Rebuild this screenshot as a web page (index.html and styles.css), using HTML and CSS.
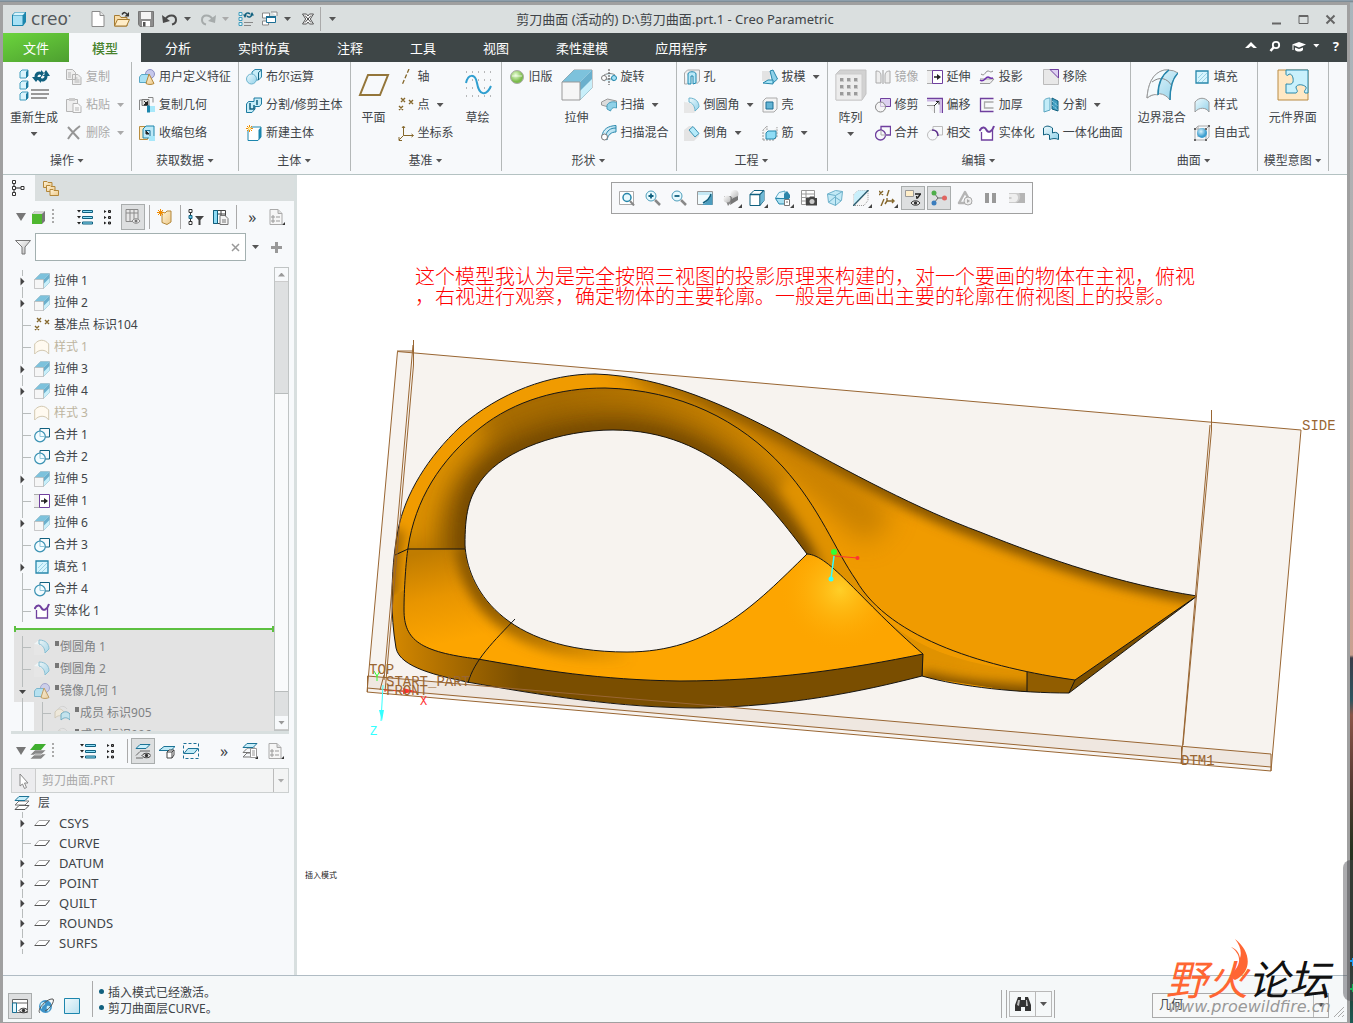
FILE: index.html
```html
<!DOCTYPE html>
<html lang="zh-CN">
<head>
<meta charset="utf-8">
<title>剪刀曲面 - Creo Parametric</title>
<link rel="stylesheet" href="styles.css">
</head>
<body>
<svg class="defs" aria-hidden="true">
<defs>
<linearGradient id="gb" x1="0" y1="0" x2="1" y2="1"><stop offset="0" stop-color="#effafd"/><stop offset="1" stop-color="#92d2ea"/></linearGradient>
<linearGradient id="gt" x1="0" y1="0" x2="1" y2="1"><stop offset="0" stop-color="#fff3d8"/><stop offset="1" stop-color="#ecc98a"/></linearGradient>
<linearGradient id="gg" x1="0" y1="0" x2="1" y2="1"><stop offset="0" stop-color="#fff"/><stop offset="1" stop-color="#b8b8b8"/></linearGradient>
<radialGradient id="rg" cx=".4" cy=".35"><stop offset="0" stop-color="#eaffd8"/><stop offset="1" stop-color="#7cbc4c"/></radialGradient>
<radialGradient id="rb" cx=".4" cy=".35"><stop offset="0" stop-color="#d8f2fb"/><stop offset="1" stop-color="#3d9fd0"/></radialGradient>
</defs>
<symbol id="cube" viewBox="0 0 16 16"><path d="M1 4l3-3h11v10l-3 4H1z" fill="#1c86ad"/><path d="M2 4.500h9.500v9.500H2z" fill="#a8e1f5"/><path d="M4 1.500h10l-2 2.500H2z" fill="#d8f4fc"/></symbol>
<symbol id="new" viewBox="0 0 16 16"><path d="M2 .5h8l4 4v11H2z" fill="#fff" stroke="#8a8a8a"/><path d="M10 .5v4h4" fill="#e6e6e6" stroke="#8a8a8a"/></symbol>
<symbol id="open" viewBox="0 0 16 16"><path d="M.5 15V4.500h5l1.500 2h6V15z" fill="#f8dca8" stroke="#a57b32"/><path d="M.5 15l3-6.500h12l-3 6.500z" fill="#ffedc8" stroke="#a57b32"/><path d="M8 3.500c2-3 4-2 5 0" fill="none" stroke="#333" stroke-width="1.500"/><path d="M15 1v4.500h-4.500z" fill="#333"/></symbol>
<symbol id="save" viewBox="0 0 16 16"><path d="M.5.5h15v15H2l-1.500-2z" fill="#8d8d8d" stroke="#777"/><path d="M3 1h10v7H3z" fill="#f4f4f4"/><path d="M4 10h8v5.500H4z" fill="#fff"/><path d="M5 11h2.500v4.500H5z" fill="#555"/></symbol>
<symbol id="undo" viewBox="0 0 16 16"><path d="M3 9c3-6 11-6 11 0 0 3-2 4-4 4.500" fill="none" stroke="currentColor" stroke-width="2"/><path d="M0 4l1 8 7-2z" fill="currentColor"/></symbol>
<symbol id="regen" viewBox="0 0 16 16"><path d="M1 1.500h3v3H1zM1 6.500h3v3H1zM1 11.500h3v3H1z" fill="#e4f7fd" stroke="#3e9cbd"/><path d="M6 11.500h9M6 14.500h7" stroke="#888"/><path d="M7 5c0-3 3-4 5-2M14 3c0 3-3 4-5 2" fill="none" stroke="#10607f" stroke-width="1.500"/><path d="M5 3.500h4L7 7zM12 4.500h4L14 1z" fill="#10607f"/></symbol>
<symbol id="wins" viewBox="0 0 16 16"><path d="M.5 2h7v5h-7zM.5 10h6v4h-6zM9 1h6v4" fill="#fff" stroke="#888"/><path d="M4.500 5.500h9v6h-9z" fill="#fff" stroke="#1c6f95"/><path d="M4 5h10v2H4z" fill="#1c6f95"/></symbol>
<symbol id="closew" viewBox="0 0 16 16"><path d="M2.500 3h4L8 5l1.500-2h4l-3.200 5 3.200 5h-4L8 11l-1.500 2h-4l3.200-5z" fill="#fff" stroke="#555"/><path d="M5 4.500l6 7M11 4.500l-6 7" stroke="#444"/></symbol>
<symbol id="copy" viewBox="0 0 16 16"><path d="M.5.5h6l3 3v7h-9zM6.500 5.500h5.500l3 3v7H6.500z" fill="#eee" stroke="#b5b5b5"/><path d="M2 4h3M2 6h3M2 8h3M8.500 9h3M8.500 11h5M8.500 13h5" stroke="#b5b5b5"/></symbol>
<symbol id="paste" viewBox="0 0 16 16"><path d="M.5 2.500h11v12H.5z" fill="#eee" stroke="#b5b5b5"/><path d="M3 1h6v3H3z" fill="#ccc"/><path d="M7 6.500h5l3 3v6H7z" fill="#f8f8f8" stroke="#b5b5b5"/><path d="M9 11h4M9 13h4" stroke="#b5b5b5"/></symbol>
<symbol id="del" viewBox="0 0 16 16"><path d="M2 2l11 12M14 1Q7 6 2 14" stroke="#969696" stroke-width="2" fill="none"/></symbol>
<symbol id="udf" viewBox="0 0 16 16"><circle cx="11" cy="5" r="4.500" fill="#c5c8ec" stroke="#8b8fc4"/><path d="M.5 8l2-2.500h7V12l-2 1.500h-7z" fill="#a8e1f5" stroke="#5aa8c5"/><path d="M10 5l5 9.500c-2 1.300-6 1.300-8 0z" fill="url(#gt)" stroke="#b3873a"/></symbol>
<symbol id="copyg" viewBox="0 0 16 16"><path d="M.5 3v10M.5 3h3M9 .5h5v5" stroke="#888" fill="none"/><path d="M3 2.500h7v6H3z" fill="#dcdcdc" stroke="#777"/><path d="M5 4l3 3M8.500 4.500V8H5z" stroke="#222" fill="#222"/><path d="M8 8.500h3v7H8z" fill="#1c86ad"/><path d="M11 9h5v6h-5z" fill="#a8e8fa"/></symbol>
<symbol id="shrink" viewBox="0 0 16 16"><path d="M.5 1.500h8v13h-8z" fill="#ffeac2" stroke="#b98e40"/><path d="M4 4l3-3h8v10l-2 2H4z" fill="#bde9f7" stroke="#1c86ad"/><path d="M6 5.500h5v6" stroke="#1c6f95" fill="none"/><path d="M7 6l3 3H7z" fill="#222" stroke="#222"/><path d="M10 11h6v5h-6z" fill="#a8e8fa"/></symbol>
<symbol id="bool" viewBox="0 0 16 16"><path d="M6 3l3-2.500h6.500V8l-3 3H6z" fill="#c7edf8" stroke="#2d87ab"/><path d="M12.500 11V3.500L15.500 1" fill="none" stroke="#10607f"/><circle cx="5.500" cy="10" r="5" fill="url(#gb)" stroke="#6cb3cd"/></symbol>
<symbol id="splitb" viewBox="0 0 16 16"><path d="M8 1h7.500v6l-2 2.500H9V12l-3 3.500H.5V7l2-2.500H8z" fill="#c7edf8" stroke="#1c7ba0"/><path d="M4 6v6h4V8M11 3v5" fill="none" stroke="#10607f" stroke-width="1.500"/></symbol>
<symbol id="newb" viewBox="0 0 16 16"><path d="M2 5l3-3h10v10l-3 3.500H2z" fill="#fff" stroke="#1c86ad"/><path d="M12.500 5L15 2v10l-2.500 3z" fill="#1c86ad"/><path d="M0 3.500h7M3.500 0v7M1 1l5 5M6 1L1 6" stroke="#f08b00"/><circle cx="3.500" cy="3.500" r="1.500" fill="#fff3a0"/></symbol>
<symbol id="axis" viewBox="0 0 16 16"><path d="M11 0L4 16" stroke="#84662a" stroke-width="1.300" stroke-dasharray="4 2"/></symbol>
<symbol id="pts" viewBox="0 0 16 16"><path d="M3 1l4 4m0-4L3 5M11 3l4 4m0-4l-4 4M1 9l4 4m0-4l-4 4" stroke="#84662a" stroke-width="1.400"/></symbol>
<symbol id="csys" viewBox="0 0 16 16"><path d="M5.500 2v8.500H15M5.500 10.500L1 15M4 3l1.500-2L7 3M13.500 9l2 1.500-2 1.500M1 12v3.500h3" fill="none" stroke="#84662a"/></symbol>
<symbol id="sphere" viewBox="0 0 16 16"><circle cx="8" cy="8" r="6.500" fill="url(#rg)" stroke="#aaa"/><path d="M3 7h10" stroke="#fff" opacity=".7"/></symbol>
<symbol id="rev" viewBox="0 0 16 16"><circle cx="3" cy="9" r="2.500" fill="#fff" stroke="#777"/><path d="M3 6c4-2 8-2 11 0M3 12c4-3 7-3 10 0" fill="#d8f2fa" stroke="#888"/><path d="M8 0v16" stroke="#444" stroke-dasharray="2 1"/><circle cx="13" cy="9" r="2.500" fill="#a8e1f5" stroke="#1c86ad"/></symbol>
<symbol id="sweep" viewBox="0 0 16 16"><path d="M.5 5l6-3 9 2v3l-5-1-3 2v2l-7-2z" fill="#dcdcdc" stroke="#999"/><path d="M6 8c2-3 6-4 9.500-2.500V11c-3-1-5 0-6 3L6 12z" fill="#8fd1e8" stroke="#4a9dbb"/></symbol>
<symbol id="sblend" viewBox="0 0 16 16"><path d="M1 11C2 4 7 1 15 .500V7C10 7 7 10 6 15z" fill="url(#gb)" stroke="#2b88ad"/><path d="M5 10C6 6 9 3 15 3" fill="none" stroke="#2b88ad"/><circle cx="3.500" cy="12" r="3" fill="#fff" stroke="#777"/></symbol>
<symbol id="hole" viewBox="0 0 16 16"><path d="M.5 4l3-3h12v11l-3 3M.5 4v11h3" fill="#eee" stroke="#aaa"/><path d="M4 5c0-3 8-3 8 0v9l-3 1V7H7v8H4z" fill="#b9e9f8" stroke="#1c86ad"/></symbol>
<symbol id="round" viewBox="0 0 16 16"><path d="M0 5l5-4h3l7 6v4l-5 5H0z" fill="#e7e7e7"/><path d="M0 5l5-4c6 0 10 3 10 8l-4 5c0-6-5-9-11-9z" fill="#f4fbfd"/><path d="M5 1c7 0 10 4 10 9l-4 4c0-4-2-8-6-9z" fill="url(#gb)" stroke="#6cb3cd"/></symbol>
<symbol id="cham" viewBox="0 0 16 16"><path d="M0 5l5-4h3l7 8v2l-5 5H0z" fill="#e4e4e4"/><path d="M5 5l4-3.500 6 7-4 3.500z" fill="#b6ebfa" stroke="#3d94b6"/></symbol>
<symbol id="draft" viewBox="0 0 16 16"><path d="M0 2h8v10H0z" fill="#e3e3e3"/><path d="M8 2l3-1 4.500 9-4.500 4z" fill="#8fd1e9" stroke="#2787ab"/><path d="M1 14l5-3h5v4z" fill="#a6e5f8" stroke="#2787ab"/></symbol>
<symbol id="shell" viewBox="0 0 16 16"><path d="M1 4l3-3h11v11l-3 3H1z" fill="#f4f4f4" stroke="#aaa"/><path d="M4 5h7v7H4z" fill="#65b5d5" stroke="#1c6f95"/></symbol>
<symbol id="rib" viewBox="0 0 16 16"><path d="M1 15V5l4-4v4M1 15h11l3-3V2" fill="#f2f2f2" stroke="#999" stroke-dasharray="2 1"/><path d="M4 8l2-2h8v6l-2 2H4z" fill="#8fdcf5" stroke="#2787ab"/></symbol>
<symbol id="mirror" viewBox="0 0 16 16"><path d="M1 2c4 0 5 2 5 5v7H1zM15 2c-4 0-5 2-5 5v7h5z" fill="#eee" stroke="#aaa"/><path d="M8 1v14" stroke="#999"/></symbol>
<symbol id="trim" viewBox="0 0 16 16"><path d="M5.500 1.500h10v8h-10z" fill="#dccff0" stroke="#6f3f9e"/><circle cx="5.500" cy="10" r="5" fill="#f4f4f4" fill-opacity=".7" stroke="#888"/></symbol>
<symbol id="mergep" viewBox="0 0 16 16"><path d="M6 5V1.500h9.500V10H11" fill="none" stroke="#6f3f9e" stroke-width="1.300"/><circle cx="5.500" cy="10" r="5" fill="none" stroke="#6f3f9e" stroke-width="1.300"/><path d="M6 5v5h5" stroke="#aaa" fill="none"/></symbol>
<symbol id="mergeb" viewBox="0 0 16 16"><path d="M6 5V1.500h9.500V10H11" fill="none" stroke="#10607f"/><circle cx="6" cy="9.500" r="5.300" fill="#f4fcff" stroke="#3a92b3" stroke-width="1.200"/><path d="M6 4.500v5h5" stroke="#8fc5da" fill="none"/></symbol>
<symbol id="extend" viewBox="0 0 16 16"><path d="M0 1.500h6v13H0" fill="#eee" stroke="#aaa"/><path d="M5.500 1.500h10v13h-10z" fill="#fff" stroke="#6f3f9e"/><path d="M7 8h4" stroke="#222" stroke-width="1.500"/><path d="M10 5l4 3-4 3z" fill="#222"/></symbol>
<symbol id="offset" viewBox="0 0 16 16"><path d="M0 1.500h15.500V16" fill="none" stroke="#6f3f9e" stroke-width="1.500"/><path d="M0 3.500h13.500V16" fill="none" stroke="#cbb6e4" stroke-width="2"/><path d="M0 8.500h7.500V16" fill="#eee" stroke="#999"/><path d="M7 9l4-4M9 4.500h3v3" stroke="#222" fill="none"/></symbol>
<symbol id="inter" viewBox="0 0 16 16"><path d="M6 5V1.500h9.500V10H11" fill="none" stroke="#bbb"/><circle cx="5.500" cy="10" r="5" fill="none" stroke="#bbb"/><path d="M5 5c4 0 6 2 6 6" stroke="#5d2f8e" stroke-width="1.500" fill="none"/></symbol>
<symbol id="proj" viewBox="0 0 16 16"><path d="M2 5c4 3 4-3 7-3 2 0 2 2 5 0" fill="none" stroke="#888"/><path d="M1 10h14l-4 4.500H1" fill="#eee" stroke="#999"/><path d="M1 11c4 3 5-3 8-3 2 0 1 2 5 1" fill="none" stroke="#6f2fae" stroke-width="1.500"/></symbol>
<symbol id="thick" viewBox="0 0 16 16"><path d="M14.500 1.500h-13v13h13" fill="none" stroke="#6f3f9e" stroke-width="1.300"/><path d="M14.500 5h-9v6h9" fill="none" stroke="#aaa" stroke-width="1.300"/></symbol>
<symbol id="solid" viewBox="0 0 16 16"><path d="M2.500 7v8h11V5" fill="#fff" stroke="#6f3f9e" stroke-width="1.300"/><path d="M.5 6c3-6 6-3 7-1 2 4 6 1 7.500-4" fill="none" stroke="#6f3f9e" stroke-width="2"/></symbol>
<symbol id="remove" viewBox="0 0 16 16"><path d="M.5.5h15v15H.5z" fill="#e8e8e8" stroke="#bbb"/><path d="M7 .5h8.500V9z" fill="#dccff0" stroke="#6f3f9e"/></symbol>
<symbol id="split" viewBox="0 0 16 16"><path d="M1 4c0-2 4-3 6-3v12l-6 2z" fill="#c2ecf8" stroke="#5aa5c0"/><path d="M9 1l6 3v10l-6-2z" fill="#3f9dc0" stroke="#10607f"/><path d="M9 4l6 5M9 8l6 5" stroke="#c2ecf8" stroke-dasharray="1 1"/></symbol>
<symbol id="unify" viewBox="0 0 16 16"><path d="M.5 3c3-3 6-2 9 0v5c2-1 4-1 6 1v5.500c-3-1.500-6-1-9 0V10c-2-1-4-1-6 0z" fill="url(#gb)" stroke="#10607f"/></symbol>
<symbol id="fill" viewBox="0 0 16 16"><path d="M2 2h12v12H2z" fill="#d6f5fe" stroke="#2787ab" stroke-width="1.300"/><path d="M4 9l5-5M4 13l9-9M8 13l5-5" stroke="#9bd3e6"/></symbol>
<symbol id="style" viewBox="0 0 16 16"><path d="M1 5c4-5 10-5 14 0v10c-3-5-10-5-14 0z" fill="url(#gb)" stroke="#999"/></symbol>
<symbol id="styleo" viewBox="0 0 16 16"><path d="M.7 5c4-5 10-5 14 0v10c-3-5-10-5-14 0z" fill="#fffaf0" stroke="#d2c8b0"/></symbol>
<symbol id="free" viewBox="0 0 16 16"><path d="M1 4l3-3h11v11l-3 3H1zM12 4H1M12 4v11M12 4l3-3M4 1v11" fill="none" stroke="#aaa"/><circle cx="8" cy="8" r="5" fill="url(#rb)"/><path d="M0 3h2v2H0zM11 3h2v2h-2zM14 0h2v2h-2zM0 14h2v2H0zM11 14h2v2h-2z" fill="#666"/></symbol>
<symbol id="extr" viewBox="0 0 32 32"><path d="M1 13L13 1h18v18L19 31" fill="#f4fcff" stroke="#999"/><path d="M1 13L13 1h18L19 13z" fill="#7dc2dc"/><path d="M19 13L31 1v18L19 31z" fill="#6ab0cd"/><path d="M19 31v-9l12-12v9z" fill="#c8effa"/><path d="M1 13h18v18H1z" fill="#f6f6f6" stroke="#999"/></symbol>
<symbol id="bregen" viewBox="0 0 32 32"><path d="M2 3l2-2h6v6l-2 2H2zM2 14l2-2h6v6l-2 2H2zM2 25l2-2h6v6l-2 2H2z" fill="#d8f3fc" stroke="#3e9cbd"/><path d="M8 9V3l2-2v6zM8 20v-6l2-2v6zM8 31v-6l2-2v6z" fill="#1c7ba0"/><path d="M13 21h18M13 25h18M13 29h16" stroke="#999" stroke-width="2"/><path d="M18 8c0-4 4-5 6-3M28 7c0 4-4 5-6 3" fill="none" stroke="#10607f" stroke-width="3"/><path d="M14 8h8l-4 5zM24 7h8l-4-6zM23 1l4 4-4 3zM23 14l-4-4 4-3z" fill="#10607f"/></symbol>
<symbol id="bplane" viewBox="0 0 32 32"><path d="M10 6h20l-8 20H2z" fill="none" stroke="#94763a" stroke-width="2"/></symbol>
<symbol id="bsketch" viewBox="0 0 32 32"><path d="M4 3h26M4 11h26M4 19h26M4 27h26" stroke="#777" stroke-dasharray="1 5"/><path d="M4 14c2-9 9-10 11 0 2 12 9 14 14 3" fill="none" stroke="#2f9fd0" stroke-width="2"/></symbol>
<symbol id="barray" viewBox="0 0 32 32"><path d="M1 5l4-4h26v24l-4 6H1z" fill="#d2d2d2" stroke="#c2c2c2"/><path d="M1 5h26v26H1z" fill="#ececec" stroke="#ccc"/><path d="M5 9h4v4H5zM12 9h4v4h-4zM19 9h4v4h-4zM5 16h4v4H5zM12 16h4v4h-4zM19 16h4v4h-4zM5 23h4v4H5zM12 23h4v4h-4zM19 23h4v4h-4z" fill="#c9c9c9"/><path d="M5 9h3v3H5zM12 9h3v3h-3zM19 9h3v3h-3zM5 16h3v3H5zM12 16h3v3h-3zM19 16h3v3h-3zM5 23h3v3H5zM12 23h3v3h-3zM19 23h3v3h-3z" fill="#9a9a9a"/></symbol>
<symbol id="bbound" viewBox="0 0 32 32"><path d="M1 29C2 14 8 1 22 1q6 0 10 3c-6 6-8 15-8 27-6-8-14-8-23-2z" fill="url(#gb)" stroke="#999"/><path d="M1 29C2 16 6 4 18 1l5 0C16 6 12 14 12 26c-4-1-7 0-11 3z" fill="#f4fafc" stroke="#999"/><path d="M6 13c8-6 15-4 20 4" fill="none" stroke="#888"/><path d="M12 26C12 14 16 6 23 1M32 4c-6 6-8 15-8 27" fill="none" stroke="#2386ad" stroke-width="1.500"/></symbol>
<symbol id="bcomp" viewBox="0 0 32 32"><path d="M1 1h30v30H1z" fill="#ffe8c4" stroke="#b98b45"/><path d="M9 1h22v23h-3c-2-2 2-4 1-6-3-3-9-3-10 0 0 3 3 4 0 6H9V15c3 0 6 1 7-2 1-5-2-10-5-7-1 1-2 0-2-1z" fill="#c9f1fc" stroke="#2787ab"/></symbol>
<symbol id="tree" viewBox="0 0 16 16"><path d="M3 4v8M5 8h5" stroke="#222"/><path d="M1.500.5h3v3h-3zM1.500 6.500h3v3h-3zM1.500 12.500h3v3h-3zM10 6.500h3v3h-3z" fill="#fff" stroke="#333"/></symbol>
<symbol id="folders" viewBox="0 0 16 16"><path d="M.5 1.500H4l1 1h4v5H.5z" fill="url(#gt)" stroke="#b3873a"/><path d="M3.500 5.500H7l1 1h4v5H3.500z" fill="url(#gt)" stroke="#b3873a"/><path d="M7 9.500h3l1 1h4.500v5H7z" fill="url(#gt)" stroke="#b3873a"/></symbol>
<symbol id="gcube" viewBox="0 0 16 16"><path d="M2 5l3-3h10v10l-3 3z" fill="#777"/><path d="M5 2h10l-3 3H2z" fill="#d5d5d5"/><path d="M2 5h10v10H2z" fill="#4fb72f"/></symbol>
<symbol id="lista" viewBox="0 0 16 16"><path d="M5.500 1.500h10v2h-10zM5.500 7.500h10v2h-10zM5.500 13h10v2h-10z" fill="#8fe0f8" stroke="#10607f"/><path d="M0 1h4L2 3.500zM0 7h4L2 9.500zM0 13h4l-2 2.500z" fill="#222"/></symbol>
<symbol id="listb" viewBox="0 0 16 16"><path d="M7.500 1.500h2v2h-2zM7.500 7.500h2v2h-2zM7.500 13h2v2h-2z" fill="#888" stroke="#222"/><path d="M3 1v3L5.500 2.500zM3 7v3l2.500-1.500zM3 12.500v3L5.500 14z" fill="#222"/></symbol>
<symbol id="cols" viewBox="0 0 16 16"><path d="M1 .5h12v12H1zM1 4h12M5 .5v12M9 .5v12" fill="#e6e6e6" stroke="#8a8a8a"/><path d="M7 12c2-3 6-3 8 0-2 3-6 3-8 0z" fill="#eee" stroke="#888"/><circle cx="11" cy="12" r="1.500" fill="#777"/></symbol>
<symbol id="shape" viewBox="0 0 16 16"><path d="M5 3l3 1 2-2h4v11l-4 2.500-5-2z" fill="url(#gt)" stroke="#b3873a"/><path d="M0 3.500h7M3.500 0v7M1 1l5 5M6 1L1 6" stroke="#f08b00"/></symbol>
<symbol id="tfilt" viewBox="0 0 16 16"><path d="M2.500 4v8" stroke="#333"/><path d="M1 .5h3v3H1zM1 12.500h3v3H1z" fill="#fff" stroke="#333"/><path d="M1 6.500h3v3H1z" fill="#6fc6e6" stroke="#10607f"/><path d="M7 7h9l-3.500 4v5h-2v-5z" fill="#444"/></symbol>
<symbol id="tcols" viewBox="0 0 16 16"><path d="M.5 1.500h12v13H.5zM.5 5h12M8 1.500v13" fill="#fff" stroke="#444"/><path d="M.5 1.500h4v13h-4z" fill="#8fdcf5" stroke="#10607f"/><path d="M7 6.500h5l3 3v6H7z" fill="#f4f4f4" stroke="#777"/><path d="M9 11h4M9 13h4" stroke="#777"/></symbol>
<symbol id="page" viewBox="0 0 16 16"><path d="M1 .5h8l4 4v11H1z" fill="#f6f6f6" stroke="#aaa"/><path d="M9 .5v4h4" fill="#ddd" stroke="#aaa"/><path d="M3 7h2v2H3zM3 11h2v2H3z" fill="none" stroke="#999"/><path d="M7 8h4M7 12h4" stroke="#999"/><path d="M16 13v3h-3z" fill="#333"/></symbol>
<symbol id="funnel" viewBox="0 0 16 16"><path d="M.5 1.500h15L10 8v7H7V8z" fill="url(#gg)" stroke="#777"/></symbol>
<symbol id="glayer" viewBox="0 0 16 16"><path d="M5 11h11l-5 5H0zM5 7h11l-5 5H0z" fill="#888" stroke="#fff" stroke-width=".5"/><path d="M5 1h11l-5 6H0z" fill="#3fae2f"/></symbol>
<symbol id="layers" viewBox="0 0 16 16"><path d="M5 10.500h10l-4 4H1l4-4" fill="#fff" stroke="#555"/><path d="M5 6h10l-4 4H1z" fill="#fff" stroke="#777"/><path d="M5 1.500h10l-4 4H1z" fill="#c9effb" stroke="#1c7396"/></symbol>
<symbol id="layers2" viewBox="0 0 16 16"><path d="M5 5h8M1 9.500l4-4M1 9.500h8M5 10h3M1 14l4-4M1 14h8" fill="none" stroke="#777"/><path d="M5 .5h10l-4 4H1z" fill="#c9effb" stroke="#1c7396"/><path d="M8.500 5.500h6v9h-6zM10 8h3M10 10h3M10 12h3" fill="#fff" stroke="#999"/><path d="M16 13v3h-3z" fill="#333"/></symbol>
<symbol id="layer" viewBox="0 0 16 16"><path d="M5 5.500h10.500l-4 5H.7z" fill="#fff" stroke="#aaa"/><path d="M.7 10.500h10.800l4-5" fill="none" stroke="#555"/></symbol>
<symbol id="layeye" viewBox="0 0 16 16"><path d="M5 8h10M1 12.500l4-4M1 15h7" stroke="#666"/><path d="M5 1.500h10l-4 4H1z" fill="#c9effb" stroke="#1c7396"/><path d="M7 12.500c2-3 7-3 9 0-2 3-7 3-9 0z" fill="#eee" stroke="#333"/><circle cx="11.500" cy="12.500" r="1.700" fill="#333"/></symbol>
<symbol id="laycube" viewBox="0 0 16 16"><path d="M5 3.500h11l-4 4H0z" fill="#bfeaf7" stroke="#1c7396"/><path d="M8 9l2-2h5v5l-2 3H8zM8 9h5v6M13 9l2-2" fill="#fff" stroke="#444"/></symbol>
<symbol id="laysel" viewBox="0 0 16 16"><path d="M.5.500h15v15H.5z" fill="none" stroke="#1c6f95" stroke-dasharray="3 2"/><path d="M5 5.500h10l-4 5H1z" fill="#bfeaf7" stroke="#1c7396"/></symbol>
<symbol id="zfit" viewBox="0 0 16 16"><path d="M.5 1.500h14v13H.5z" fill="#fff" stroke="#aaa"/><circle cx="8" cy="7.500" r="4" fill="#e8fafe" stroke="#2787ab" stroke-width="1.500"/><path d="M11 11l4 4.500" stroke="#888" stroke-width="2"/></symbol>
<symbol id="zin" viewBox="0 0 16 16"><circle cx="6" cy="6" r="5" fill="#e8fafe" stroke="#4d9ebb"/><path d="M3.500 6h5M6 3.500v5" stroke="#10607f" stroke-width="1.800"/><path d="M10 10l5 5" stroke="#888" stroke-width="2.500"/></symbol>
<symbol id="zout" viewBox="0 0 16 16"><circle cx="6" cy="6" r="5" fill="#e8fafe" stroke="#4d9ebb"/><path d="M3.500 6h5" stroke="#10607f" stroke-width="1.800"/><path d="M10 10l5 5" stroke="#888" stroke-width="2.500"/></symbol>
<symbol id="repaint" viewBox="0 0 16 16"><path d="M.5 1.500h15v13H.5z" fill="#f0fbfe" stroke="#999"/><path d="M15.500 3C13 9 10 12 5 15h10.500z" fill="#4c9dbf"/><path d="M1 2h14v3H1z" fill="#c4e8f4"/><path d="M6 13c4-2 7-5 8-9" stroke="#10607f" fill="none" stroke-width="1.500"/></symbol>
<symbol id="shade" viewBox="0 0 16 16"><path d="M8 3h7l-1 4-5 1z" fill="#999"/><path d="M1 6h8v5l-4 5z" fill="#888"/><circle cx="11.500" cy="4" r="4" fill="url(#gg)"/><circle cx="4" cy="9" r="3.500" fill="url(#gg)"/><path d="M7 15l1-6 7-3v4z" fill="#777"/></symbol>
<symbol id="wire" viewBox="0 0 16 16"><path d="M1 4.500l4-4h10v10l-4 5H1z" fill="#fff" stroke="#10607f"/><path d="M1 4.500h10v11M11 4.500l4-4" fill="none" stroke="#10607f" stroke-width="1.500"/><path d="M11.500 5L15 1v9.500l-3.500 4z" fill="#6db8d5"/></symbol>
<symbol id="views" viewBox="0 0 16 16"><path d="M.5 8L4 2.500 10 1v8z" fill="#e4f7fd" stroke="#5aa8c5"/><path d="M.5 8.500H14L10 14H4z" fill="#a8dff0" stroke="#2787ab"/><path d="M9 8V4l3-3 3 4v3z" fill="#2d86aa"/><path d="M9.500 9.500h5v6h-5zM11 12h2" fill="#fff" stroke="#777"/></symbol>
<symbol id="cam" viewBox="0 0 16 16"><path d="M.5.500h13v14H.5zM.5 4h13M.5 7.500h13M.5 11h13M5 .5v14" fill="#fff" stroke="#999"/><path d="M5 8h3l1-1.500h4L14 8h2v7.500H5z" fill="#444"/><circle cx="11" cy="11.500" r="2.500" fill="#ccc"/></symbol>
<symbol id="persp" viewBox="0 0 16 16"><path d="M.5 4l8-3.500 7 1-1 9-6 5-7-3z" fill="#c2e9f6" stroke="#6db0ca"/><path d="M.5 4l8 1.500 7-4M8.500 5.500v10M2 12l6-5 6 4" fill="none" stroke="#6db0ca"/></symbol>
<symbol id="sect" viewBox="0 0 16 16"><path d="M1 4.500l4-4h10v10l-4 5H1z" fill="#f7f7f7" stroke="#999" stroke-dasharray="1 1"/><path d="M1 14V4.500l4-4h9z" fill="#c9effb"/><path d="M0 16L15.500 0" stroke="#2b5d70" stroke-width="1.500"/></symbol>
<symbol id="datum" viewBox="0 0 16 16"><path d="M0 1l4 4m0-4L0 5M10 0L8 6M5 9l-3 7M8 8v3h6M8 11l-2 3M13 9l2 2-2 2" fill="none" stroke="#84662a" stroke-width="1.400"/></symbol>
<symbol id="anno" viewBox="0 0 16 16"><path d="M.5.500h8v6h-8z" fill="#ffeec8" stroke="#999"/><path d="M10 4h5.500l-3 4M12 9l-.5-3" fill="none" stroke="#222" stroke-width="1.300"/><path d="M6 13c2-3 7-3 9 0-2 3-7 3-9 0z" fill="#eee" stroke="#333"/><circle cx="10.500" cy="13" r="1.700" fill="#333"/></symbol>
<symbol id="spin" viewBox="0 0 16 16"><path d="M3 3l4 5h7M7 8l-4 5" fill="none" stroke="#666"/><circle cx="3" cy="3" r="2.500" fill="#4fae4a"/><circle cx="13.500" cy="8" r="2.500" fill="#e06560"/><circle cx="3" cy="13" r="2.500" fill="#3a7dbd"/></symbol>
<symbol id="sim" viewBox="0 0 16 16"><path d="M8 2l6 11H2z" fill="none" stroke="#b5b5b5" stroke-width="2.500" stroke-linejoin="round"/><circle cx="11" cy="11" r="4" fill="#eee" stroke="#aaa"/><path d="M10 9l3 2-3 2z" fill="#aaa"/></symbol>
<symbol id="pause" viewBox="0 0 16 16"><path d="M2 3h4v10H2zM9 3h4v10H9z" fill="#999"/></symbol>
<symbol id="fring" viewBox="0 0 16 16"><path d="M0 3h16v10H0z" fill="#ccc"/><path d="M0 4h6c4 0 4 7 0 8H0v-3c4 0 4-2 0-2z" fill="#eee"/><path d="M10 3h6v10H6c6-1 6-8 4-10z" fill="#b5b5b5"/></symbol>
<symbol id="panel" viewBox="0 0 16 16"><path d="M.5 1.500h15v13H.5zM.5 5h15" fill="#fff" stroke="#666"/><path d="M.5 5h4v9.500h-4z" fill="#e4f7fd" stroke="#1c7396"/><path d="M7 12.500c2-3 7-3 9 0-2 3-7 3-9 0z" fill="#eee" stroke="#333"/><circle cx="11.500" cy="12.500" r="1.700" fill="#333"/></symbol>
<symbol id="globe" viewBox="0 0 16 16"><circle cx="7.500" cy="8.500" r="6.500" fill="#3d93c8"/><path d="M3 5c3-2 5-1 4 1s-3 1-3 5c-2-1-2-4-1-6zM9 8c3-1 4 1 3 3l-2 3c-1-2-2-4-1-6z" fill="#c4ecf9"/><path d="M2 15C-2 12 9 0 15 1c2 2-3 10-8 12" fill="none" stroke="#555"/></symbol>
<symbol id="sq" viewBox="0 0 16 16"><path d="M.5.500h15v15H.5z" fill="url(#gb)" fill-opacity=".6" stroke="#1c86ad"/></symbol>
<symbol id="bino" viewBox="0 0 16 16"><path d="M3 1h3v3h4V1h3l3 8v6h-6v-4H6v4H0V9z" fill="#333"/><path d="M2 9l1-5h2l-1 6zM11 10V4h1l1 6z" fill="#bbb"/></symbol>
<symbol id="member" viewBox="0 0 16 16"><path d="M1 7c3-4 6-4 9 0v6c-3-3-6-3-9 0z" fill="#f2ead8" stroke="#c9c0aa"/><path d="M4 4c3-4 7-3 9 0" fill="none" stroke="#ccc"/><path d="M7 9c3-3 6-3 9 0v6c-3-3-6-3-9 0z" fill="#b9e4f1" stroke="#4a9ab8"/></symbol>
<symbol id="cursor" viewBox="0 0 16 16"><path d="M4 1l8 9H8.500l2 4.500-2 1L6.500 11 4 13z" fill="#fff" stroke="#888"/></symbol>
<symbol id="search" viewBox="0 0 16 16"><circle cx="9" cy="7" r="3.200" fill="none" stroke="#fff" stroke-width="1.800"/><path d="M6.500 9.500L3.500 13" stroke="#fff" stroke-width="2.500"/></symbol>
<symbol id="cap" viewBox="0 0 16 16"><path d="M1 6.500l7-2.500 7 2.500L8 9.500zM4 9.500V12c2 2 6 2 8 0V9.500L8 11zM1.500 6.500V12h1V7z" fill="#fff"/></symbol>
<symbol id="exp" viewBox="0 0 20 22"><path d="M8.500 0v6M8.500 17v5" stroke="#b8bcbc"/><path d="M6.500 7.500l4 4-4 4z" fill="#444"/></symbol>
<symbol id="leaf" viewBox="0 0 20 22"><path d="M8.500 0v22M8.500 11.500H17" stroke="#b8bcbc"/></symbol>
<symbol id="opened" viewBox="0 0 20 22"><path d="M8.500 0v7M8.500 18v4" stroke="#b8bcbc"/><path d="M5 10h7l-3.500 4z" fill="#444"/></symbol>
<symbol id="line" viewBox="0 0 20 22"><path d="M8.500 0v22" stroke="#b8bcbc"/></symbol>
</svg>

<div class="window">
<header class="titlebar">
  <div class="quick">
    <svg class="i logo"><use href="#cube"/></svg><span class="brand">creo<sup>•</sup></span>
    <button aria-label="新建"><svg class="i"><use href="#new"/></svg></button>
    <button aria-label="打开"><svg class="i"><use href="#open"/></svg></button>
    <button aria-label="保存"><svg class="i"><use href="#save"/></svg></button>
    <button aria-label="撤消"><svg class="i"><use href="#undo"/></svg></button><i class="dn"></i>
    <button class="off flip" aria-label="重做"><svg class="i"><use href="#undo"/></svg></button><i class="dn off"></i>
    <button aria-label="重新生成"><svg class="i"><use href="#regen"/></svg></button>
    <button aria-label="窗口"><svg class="i"><use href="#wins"/></svg></button><i class="dn"></i>
    <button aria-label="关闭窗口"><svg class="i"><use href="#closew"/></svg></button>
    <span class="custom"><i class="dn"></i></span>
  </div>
  <h1>剪刀曲面 (活动的) D:\剪刀曲面.prt.1 - Creo Parametric</h1>
  <div class="winbtns">
    <button aria-label="最小化"><svg viewBox="0 0 11 11"><path d="M1 9.500h9" stroke="#666" stroke-width="2"/></svg></button>
    <button aria-label="最大化"><svg viewBox="0 0 11 11"><path d="M1 1.500h9v8H1z" fill="none" stroke="#666"/><path d="M1 2h9" stroke="#666" stroke-width="2"/></svg></button>
    <button aria-label="关闭"><svg viewBox="0 0 11 11"><path d="M1.500 1.500l8 8M9.500 1.500l-8 8" stroke="#666" stroke-width="2"/></svg></button>
  </div>
</header>
<nav class="tabs">
  <button class="file">文件</button><button class="active">模型</button><button>分析</button><button>实时仿真</button><button>注释</button><button>工具</button><button>视图</button><button>柔性建模</button><button>应用程序</button>
  <div class="help"><button aria-label="最小化功能区"><svg class="i" viewBox="0 0 16 16"><path d="M2 10l6-6 6 6h-3.500L8 8l-2.500 2z" fill="#fff"/></svg></button><button aria-label="搜索"><svg class="i"><use href="#search"/></svg></button><button aria-label="学习"><svg class="i"><use href="#cap"/></svg></button><i class="dn"></i><button>?</button></div>
</nav>

<section class="ribbon">
  <div class="group"><div class="body">
    <button class="big"><svg><use href="#bregen"/></svg>重新生成<i class="dn"></i></button>
    <div class="col off"><button><svg class="i"><use href="#copy"/></svg>复制</button><button><svg class="i"><use href="#paste"/></svg>粘贴<i class="dn"></i></button><button><svg class="i"><use href="#del"/></svg>删除<i class="dn"></i></button></div>
  </div><button class="name">操作<i class="dn"></i></button></div>
  <div class="group"><div class="body">
    <div class="col"><button><svg class="i"><use href="#udf"/></svg>用户定义特征</button><button><svg class="i"><use href="#copyg"/></svg>复制几何</button><button><svg class="i"><use href="#shrink"/></svg>收缩包络</button></div>
  </div><button class="name">获取数据<i class="dn"></i></button></div>
  <div class="group"><div class="body">
    <div class="col"><button><svg class="i"><use href="#bool"/></svg>布尔运算</button><button><svg class="i"><use href="#splitb"/></svg>分割/修剪主体</button><button><svg class="i"><use href="#newb"/></svg>新建主体</button></div>
  </div><button class="name">主体<i class="dn"></i></button></div>
  <div class="group"><div class="body">
    <button class="big"><svg><use href="#bplane"/></svg>平面</button>
    <div class="col"><button><svg class="i"><use href="#axis"/></svg>轴</button><button><svg class="i"><use href="#pts"/></svg>点<i class="dn"></i></button><button><svg class="i"><use href="#csys"/></svg>坐标系</button></div>
    <button class="big"><svg><use href="#bsketch"/></svg>草绘</button>
  </div><button class="name">基准<i class="dn"></i></button></div>
  <div class="group"><div class="body">
    <div class="col"><button><svg class="i"><use href="#sphere"/></svg>旧版</button></div>
    <button class="big"><svg><use href="#extr"/></svg>拉伸</button>
    <div class="col"><button><svg class="i"><use href="#rev"/></svg>旋转</button><button><svg class="i"><use href="#sweep"/></svg>扫描<i class="dn"></i></button><button><svg class="i"><use href="#sblend"/></svg>扫描混合</button></div>
  </div><button class="name">形状<i class="dn"></i></button></div>
  <div class="group"><div class="body">
    <div class="col"><button><svg class="i"><use href="#hole"/></svg>孔</button><button><svg class="i"><use href="#round"/></svg>倒圆角<i class="dn"></i></button><button><svg class="i"><use href="#cham"/></svg>倒角<i class="dn"></i></button></div>
    <div class="col"><button><svg class="i"><use href="#draft"/></svg>拔模<i class="dn"></i></button><button><svg class="i"><use href="#shell"/></svg>壳</button><button><svg class="i"><use href="#rib"/></svg>筋<i class="dn"></i></button></div>
  </div><button class="name">工程<i class="dn"></i></button></div>
  <div class="group"><div class="body">
    <button class="big"><svg><use href="#barray"/></svg>阵列<i class="dn"></i></button>
    <div class="col"><button class="off"><svg class="i"><use href="#mirror"/></svg>镜像</button><button><svg class="i"><use href="#trim"/></svg>修剪</button><button><svg class="i"><use href="#mergep"/></svg>合并</button></div>
    <div class="col"><button><svg class="i"><use href="#extend"/></svg>延伸</button><button><svg class="i"><use href="#offset"/></svg>偏移</button><button><svg class="i"><use href="#inter"/></svg>相交</button></div>
    <div class="col"><button><svg class="i"><use href="#proj"/></svg>投影</button><button><svg class="i"><use href="#thick"/></svg>加厚</button><button><svg class="i"><use href="#solid"/></svg>实体化</button></div>
    <div class="col"><button><svg class="i"><use href="#remove"/></svg>移除</button><button><svg class="i"><use href="#split"/></svg>分割<i class="dn"></i></button><button><svg class="i"><use href="#unify"/></svg>一体化曲面</button></div>
  </div><button class="name">编辑<i class="dn"></i></button></div>
  <div class="group"><div class="body">
    <button class="big"><svg><use href="#bbound"/></svg>边界混合</button>
    <div class="col"><button><svg class="i"><use href="#fill"/></svg>填充</button><button><svg class="i"><use href="#style"/></svg>样式</button><button><svg class="i"><use href="#free"/></svg>自由式</button></div>
  </div><button class="name">曲面<i class="dn"></i></button></div>
  <div class="group tight"><div class="body">
    <button class="big"><svg><use href="#bcomp"/></svg>元件界面</button>
  </div><button class="name">模型意图<i class="dn"></i></button></div>
</section>

<main class="main">
<aside class="side">
  <div class="sidetabs"><button class="active" aria-label="模型树"><svg class="i"><use href="#tree"/></svg></button><button aria-label="文件夹浏览器"><svg class="i"><use href="#folders"/></svg></button></div>
  <div class="pane treepane">
    <div class="tools">
      <i class="dn wide"></i><svg class="i"><use href="#gcube"/></svg><i class="dots"></i>
      <span class="set"><button aria-label="展开"><svg class="i"><use href="#lista"/></svg></button><button aria-label="收缩"><svg class="i"><use href="#listb"/></svg></button><button class="on" aria-label="列"><svg class="i"><use href="#cols"/></svg></button></span>
      <i class="vr"></i><button aria-label="形状"><svg class="i"><use href="#shape"/></svg></button><i class="vr"></i>
      <button aria-label="树过滤器"><svg class="i"><use href="#tfilt"/></svg></button><button aria-label="树列"><svg class="i"><use href="#tcols"/></svg></button><i class="vr"></i>
      <button class="end">»</button><button aria-label="设置"><svg class="i"><use href="#page"/></svg></button>
    </div>
    <div class="filter">
      <svg class="i"><use href="#funnel"/></svg>
      <div class="box"><input type="text" aria-label="过滤"><button aria-label="清除"><svg viewBox="0 0 9 9"><path d="M1 1l7 7M8 1L1 8" stroke="#999" stroke-width="1.500"/></svg></button></div>
      <i class="dn"></i>
      <button class="plus" aria-label="添加"><svg viewBox="0 0 11 11"><path d="M5.500 0v11M0 5.500h11" stroke="#999" stroke-width="3"/></svg></button>
    </div>
    <div class="treewrap">
      <ul class="tree">
        <li><svg class="tw"><use href="#exp"/></svg><svg class="i"><use href="#extr"/></svg>拉伸 1</li>
        <li><svg class="tw"><use href="#exp"/></svg><svg class="i"><use href="#extr"/></svg>拉伸 2</li>
        <li><svg class="tw"><use href="#leaf"/></svg><svg class="i"><use href="#pts"/></svg>基准点 标识104</li>
        <li class="sup"><svg class="tw"><use href="#leaf"/></svg><svg class="i"><use href="#styleo"/></svg>样式 1</li>
        <li><svg class="tw"><use href="#exp"/></svg><svg class="i"><use href="#extr"/></svg>拉伸 3</li>
        <li><svg class="tw"><use href="#exp"/></svg><svg class="i"><use href="#extr"/></svg>拉伸 4</li>
        <li class="sup"><svg class="tw"><use href="#leaf"/></svg><svg class="i"><use href="#styleo"/></svg>样式 3</li>
        <li><svg class="tw"><use href="#leaf"/></svg><svg class="i"><use href="#mergeb"/></svg>合并 1</li>
        <li><svg class="tw"><use href="#leaf"/></svg><svg class="i"><use href="#mergeb"/></svg>合并 2</li>
        <li><svg class="tw"><use href="#exp"/></svg><svg class="i"><use href="#extr"/></svg>拉伸 5</li>
        <li><svg class="tw"><use href="#leaf"/></svg><svg class="i"><use href="#extend"/></svg>延伸 1</li>
        <li><svg class="tw"><use href="#exp"/></svg><svg class="i"><use href="#extr"/></svg>拉伸 6</li>
        <li><svg class="tw"><use href="#leaf"/></svg><svg class="i"><use href="#mergeb"/></svg>合并 3</li>
        <li><svg class="tw"><use href="#exp"/></svg><svg class="i"><use href="#fill"/></svg>填充 1</li>
        <li><svg class="tw"><use href="#leaf"/></svg><svg class="i"><use href="#mergeb"/></svg>合并 4</li>
        <li><svg class="tw"><use href="#leaf"/></svg><svg class="i"><use href="#solid"/></svg>实体化 1</li>
        <li class="insert"></li>
        <li class="dim"><svg class="tw"><use href="#leaf"/></svg><svg class="i"><use href="#round"/></svg><b></b>倒圆角 1</li>
        <li class="dim"><svg class="tw"><use href="#leaf"/></svg><svg class="i"><use href="#round"/></svg><b></b>倒圆角 2</li>
        <li class="dim"><svg class="tw"><use href="#opened"/></svg><svg class="i"><use href="#udf"/></svg><b></b>镜像几何 1</li>
        <li class="dim child"><svg class="tw"><use href="#line"/></svg><svg class="tw"><use href="#leaf"/></svg><svg class="i"><use href="#member"/></svg><b></b>成员 标识905</li>
        <li class="dim child"><svg class="tw"><use href="#line"/></svg><svg class="tw"><use href="#leaf"/></svg><svg class="i"><use href="#member"/></svg><b></b>成员 标识906</li>
      </ul>
      <div class="scroll"><i class="up"></i><i class="track"></i><i class="thumb"></i><i class="track low"></i><i class="down"></i></div>
    </div>
  </div>
  <div class="pane layerpane">
    <div class="tools">
      <i class="dn wide"></i><svg class="i"><use href="#glayer"/></svg><i class="dots"></i>
      <span class="set"><button aria-label="展开"><svg class="i"><use href="#lista"/></svg></button><button aria-label="收缩"><svg class="i"><use href="#listb"/></svg></button></span><i class="vr"></i>
      <span class="trio"><button class="on" aria-label="显示层"><svg class="i"><use href="#layeye"/></svg></button><button aria-label="项"><svg class="i"><use href="#laycube"/></svg></button><button aria-label="选择"><svg class="i"><use href="#laysel"/></svg></button></span>
      <button class="end">»</button><button aria-label="层"><svg class="i"><use href="#layers2"/></svg></button><button aria-label="设置"><svg class="i"><use href="#page"/></svg></button>
    </div>
    <div class="model"><button aria-label="选择模型"><svg class="i"><use href="#cursor"/></svg></button><select aria-label="活动模型" disabled><option>剪刀曲面.PRT</option></select><span><i class="dn off"></i></span></div>
    <ul class="layerlist">
      <li class="root"><svg class="i"><use href="#layers"/></svg>层</li>
      <li><svg class="tw"><use href="#exp"/></svg><svg class="i"><use href="#layer"/></svg>CSYS</li>
      <li><svg class="tw"><use href="#leaf"/></svg><svg class="i"><use href="#layer"/></svg>CURVE</li>
      <li><svg class="tw"><use href="#exp"/></svg><svg class="i"><use href="#layer"/></svg>DATUM</li>
      <li><svg class="tw"><use href="#exp"/></svg><svg class="i"><use href="#layer"/></svg>POINT</li>
      <li><svg class="tw"><use href="#exp"/></svg><svg class="i"><use href="#layer"/></svg>QUILT</li>
      <li><svg class="tw"><use href="#exp"/></svg><svg class="i"><use href="#layer"/></svg>ROUNDS</li>
      <li><svg class="tw"><use href="#exp"/></svg><svg class="i"><use href="#layer"/></svg>SURFS</li>
    </ul>
  </div>
</aside>

<section class="view">
<svg class="scene" viewBox="297 175 1050 800" preserveAspectRatio="xMidYMin meet">
<defs>
<path id="outer" d="M392 597C392 575 394 550 398 530C405 494 428 457 460 427C500 392 550 374 595 374C665 376 730 408 780 434C850 473 920 510 980 532C1050 560 1120 584 1197 596L1069 693C1020 693 960 687 922 676C860 692 790 706 700 708C620 708 540 695 467 682C440 676 400 668 396 648C393 630 392 615 392 597Z"/>
<path id="holep" d="M807 554C770 505 715 430 613 430C560 430 505 450 483 478C468 497 465 515 465 545C467 585 500 652 627 652C710 652 755 605 807 554Z"/>
<clipPath id="cbody"><path clip-rule="evenodd" d="M392 597C392 575 394 550 398 530C405 494 428 457 460 427C500 392 550 374 595 374C665 376 730 408 780 434C850 473 920 510 980 532C1050 560 1120 584 1197 596L1069 693C1020 693 960 687 922 676C860 692 790 706 700 708C620 708 540 695 467 682C440 676 400 668 396 648C393 630 392 615 392 597ZM807 554C770 505 715 430 613 430C560 430 505 450 483 478C468 497 465 515 465 545C467 585 500 652 627 652C710 652 755 605 807 554Z"/></clipPath>
<clipPath id="ctube"><path d="M408 549C415 500 440 460 480 428C515 400 560 388 605 388C680 390 740 420 783 467C820 508 835 550 856 580C890 640 940 660 1027 672V693L922 677V654C860 600 830 555 807 554C770 505 715 430 613 430C560 430 505 450 483 478C468 497 465 515 465 549Z"/></clipPath>
<clipPath id="clow"><path d="M408 549C405 575 404 590 404 610C404 640 420 652 478 659C540 670 600 680 680 681C770 681 850 669 923 654C860 600 830 555 807 554C755 605 710 652 627 652C500 652 467 585 465 549Z"/></clipPath>
<linearGradient id="lowg" gradientUnits="userSpaceOnUse" x1="440" y1="549" x2="460" y2="640"><stop offset="0" stop-color="#c07c00"/><stop offset=".5" stop-color="#e89500"/><stop offset="1" stop-color="#fda500"/></linearGradient>
<linearGradient id="sideg" gradientUnits="userSpaceOnUse" x1="392" y1="0" x2="520" y2="0"><stop offset="0" stop-color="#d48800"/><stop offset=".4" stop-color="#b07000"/><stop offset="1" stop-color="#7a4e00"/></linearGradient>
<linearGradient id="tubeg" gradientUnits="userSpaceOnUse" x1="560" y1="400" x2="840" y2="560"><stop offset="0" stop-color="#a86c00"/><stop offset=".6" stop-color="#cf8600"/><stop offset="1" stop-color="#e29300"/></linearGradient>
<linearGradient id="edgeg" gradientUnits="userSpaceOnUse" x1="600" y1="0" x2="720" y2="0"><stop offset="0" stop-color="#7a4e00" stop-opacity="0"/><stop offset="1" stop-color="#7a4e00"/></linearGradient>
<linearGradient id="holeg" gradientUnits="userSpaceOnUse" x1="480" y1="0" x2="620" y2="0"><stop offset="0" stop-color="#8a5800"/><stop offset="1" stop-color="#8a5800" stop-opacity=".1"/></linearGradient>
<radialGradient id="glow" gradientUnits="userSpaceOnUse" cx="840" cy="590" r="60"><stop offset="0" stop-color="#ffcf28"/><stop offset="1" stop-color="#ffa800" stop-opacity="0"/></radialGradient>
<filter id="b6" filterUnits="userSpaceOnUse" x="350" y="330" width="900" height="420"><feGaussianBlur stdDeviation="6"/></filter>
<filter id="b14" filterUnits="userSpaceOnUse" x="350" y="330" width="900" height="420"><feGaussianBlur stdDeviation="14"/></filter>
</defs>
<path d="M397 351L1301 430L1271 771L367 692Z" fill="#f7f3ef"/>
<path d="M368 676L1271 754V767L367 689Z" fill="#efe7e0"/>
<g clip-path="url(#cbody)">
  <use href="#outer" fill="#f09b00"/>
  <path d="M600 370C665 376 730 408 780 434C850 473 920 510 980 532C1050 560 1120 584 1197 596" fill="none" stroke="url(#edgeg)" stroke-width="14" filter="url(#b6)"/>
  <path d="M640 378C720 398 780 440 880 530" fill="none" stroke="#a06600" stroke-width="40" opacity=".5" filter="url(#b14)"/>
  <path d="M392 597C392 575 394 550 398 530" fill="none" stroke="#a06600" stroke-width="14" filter="url(#b6)"/>
  <g clip-path="url(#ctube)">
    <path d="M380 340H1100V720H380Z" fill="url(#tubeg)"/>
    <path d="M408 549C415 500 440 460 480 428" fill="none" stroke="#dc9000" stroke-width="50" filter="url(#b14)"/>
    <use href="#holep" fill="none" stroke="#744900" stroke-width="30" filter="url(#b14)"/>
    <use href="#holep" fill="none" stroke="#744900" stroke-width="10" filter="url(#b6)"/>
    <path d="M790 480C830 540 850 590 900 640L960 660" fill="none" stroke="#e09200" stroke-width="26" filter="url(#b6)"/>
    <path d="M920 684C960 694 1020 700 1070 698" fill="none" stroke="#7a4e00" stroke-width="26" filter="url(#b6)"/>
  </g>
  <g clip-path="url(#clow)">
    <path d="M380 540H940V700H380Z" fill="url(#lowg)"/>
    <path d="M465 545C467 585 500 652 627 652" fill="none" stroke="url(#holeg)" stroke-width="20" filter="url(#b6)"/>
    <circle cx="840" cy="590" r="60" fill="url(#glow)"/>
  </g>
  <path d="M404 610C404 640 420 652 478 659C540 670 600 680 680 681C770 681 850 669 923 654V677C860 692 790 706 700 708C620 708 540 695 467 682C440 676 400 668 396 648C393 630 392 615 392 597L404 590Z" fill="url(#sideg)"/>
  <path d="M1027 672L1075 680L1069 693L1027 692Z" fill="#915d00"/>
  <path d="M1197 596L1075 680L1069 693Z" fill="#7a4e00"/>
</g>
<g fill="none" stroke="#151515">
  <use href="#outer"/><use href="#holep"/>
  <path d="M404 610C404 590 406 560 408 548C415 500 440 460 480 428C515 400 560 388 605 388C680 390 740 420 783 467C820 508 835 550 856 580C890 640 990 668 1075 680"/>
  <path d="M404 610C404 640 420 652 478 659C540 670 600 680 680 681C770 681 850 669 923 654L922 676"/>
  <path d="M395 555L408 549H465M515 619C495 640 474 660 468 683M807 554C830 555 860 600 923 654M1027 672V692M1197 596L1075 680L1069 693"/>
</g>
<g fill="none" stroke="#996633">
  <path d="M397.500 351.500L1301 430L1271 771L367 692ZM397 351H412"/>
  <path d="M367.500 692V676L1271 754V771M367 688L1271 767M380 690L384 675"/>
  <path d="M413.500 340V365L385 692M413 345L384 680"/>
  <path d="M1211.500 410V430L1183 745M1210 425L1181 764M1181.500 747V764"/>
</g>
<path d="M834 556L858 558" stroke="#f33"/><circle cx="857.500" cy="558" r="2" fill="#f33"/>
<path d="M834 556L831 579" stroke="#3ff" stroke-width="1.500"/><circle cx="831" cy="579" r="2.500" fill="#3ff"/><circle cx="834" cy="552" r="3" fill="#3f3"/>
<path d="M384 690L417 692" stroke="#f33"/><path d="M403 688l12 3-12 3z" fill="#f33"/>
<path d="M383 685L381 721" stroke="#3ff"/><path d="M379 710h5l-2 11z" fill="#3ff"/><path d="M377 681v-5l-3-5M377 676l3-5" stroke="#3f3" fill="none"/>
<g class="tags"><text x="1302" y="430">SIDE</text><text x="369" y="674">TOP</text><text x="386" y="686">START_PART</text><text x="386" y="695">FRONT</text><text x="1181" y="765">DTM1</text></g>
<text class="axis ax" x="420" y="705">X</text><text class="axis az" x="370" y="735">Z</text>
</svg>
<div class="viewtools">
  <button aria-label="重新调整"><svg class="i"><use href="#zfit"/></svg></button><button aria-label="放大"><svg class="i"><use href="#zin"/></svg></button><button aria-label="缩小"><svg class="i"><use href="#zout"/></svg></button><button aria-label="重画"><svg class="i"><use href="#repaint"/></svg></button><button class="more" aria-label="渲染"><svg class="i"><use href="#shade"/></svg></button><button class="more" aria-label="显示样式"><svg class="i"><use href="#wire"/></svg></button><button class="more" aria-label="已保存方向"><svg class="i"><use href="#views"/></svg></button><button aria-label="视图管理器"><svg class="i"><use href="#cam"/></svg></button><button aria-label="透视图"><svg class="i"><use href="#persp"/></svg></button><button class="more" aria-label="截面"><svg class="i"><use href="#sect"/></svg></button><button class="more" aria-label="基准显示"><svg class="i"><use href="#datum"/></svg></button><button class="on" aria-label="注释显示"><svg class="i"><use href="#anno"/></svg></button><button class="on" aria-label="旋转中心"><svg class="i"><use href="#spin"/></svg></button><button aria-label="仿真"><svg class="i"><use href="#sim"/></svg></button><button aria-label="暂停"><svg class="i"><use href="#pause"/></svg></button><button aria-label="结果"><svg class="i"><use href="#fring"/></svg></button>
</div>
<p class="note">这个模型我认为是完全按照三视图的投影原理来构建的，对一个要画的物体在主视，俯视<br>，右视进行观察，确定物体的主要轮廓。一般是先画出主要的轮廓在俯视图上的投影。</p>
<p class="mode">插入模式</p>
</section>
</main>

<footer class="status">
  <div class="sbtns"><button class="on" aria-label="导航器"><svg class="i"><use href="#panel"/></svg></button><button aria-label="浏览器"><svg class="i"><use href="#globe"/></svg></button><button aria-label="全屏"><svg class="i"><use href="#sq"/></svg></button></div>
  <ul class="msgs"><li>插入模式已经激活。</li><li>剪刀曲面层CURVE。</li></ul>
  <div class="find"><button aria-label="查找"><svg class="i"><use href="#bino"/></svg></button><button aria-label="查找选项"><i class="dn"></i></button></div>
  <div class="geo"><select aria-label="选择过滤器"><option>几何</option></select><span><i class="dn"></i></span></div>
  <svg class="grip" viewBox="0 0 12 12"><path d="M1 11L11 1M5 11l6-6M9 11l2-2" stroke="#aaa"/></svg>
</footer>
</div>
<div class="dock"><svg viewBox="0 0 10 141"><path d="M7 101h3M10 98v8" stroke="#1aa0ff" stroke-width="2"/><path d="M7 129h3M10 124v8" stroke="#12b85a" stroke-width="2"/></svg></div>
<div class="mark"><div class="cn"><span>野火</span>论坛</div><div class="url">www.proewildfire.cn</div>
<svg viewBox="0 0 20 44"><path d="M5 1C22 14 22 34 5 42C0 40 2 36 5 32C13 22 8 14 1 9C6 11 9 14 10 20C12 14 10 7 5 1Z" fill="#ff6633"/></svg></div>
</body>
</html>
```
FILE: styles.css
```css
* { box-sizing: border-box; }
body {
  margin: 0;
  height: 100vh;
  overflow: hidden;
  padding: 2px 3px 0 0;
  background: linear-gradient(#8d9fac 0, #8d9fac 1px, #71808a 1px, #a9b6bd 3px, #b9a9a6 400px, #c9a090 655px, #3a3c48 658px, #2f5560 700px, #8a5548 715px, #5a3c34 780px, #26331f 850px, #24301f 960px, #1d5a54 100%);
  color: #404448;
  font: 12px/16px "Noto Sans", "Noto Sans CJK SC", sans-serif;
}
button { display: flex; align-items: center; justify-content: center; margin: 0; padding: 0; border: 0; background: none; color: inherit; font: inherit; white-space: nowrap; }
ul, p, h1 { margin: 0; padding: 0; list-style: none; }
svg { display: block; flex: none; }
.defs { position: absolute; width: 0; height: 0; }
.i { width: 16px; height: 16px; }
.dn { flex: none; width: 7px; height: 4px; background: #555; clip-path: polygon(0 0, 100% 0, 50% 100%); }
.dn.wide { width: 10px; height: 8px; background: #777; }
.off { color: #aaa; }
.off .dn, .dn.off { background: #aaa; }
.on { background: #dddfe0; outline: 1px solid #a9adad; }
.window { display: flex; flex-direction: column; height: 100%; border: 3px solid #a0a0a0; border-bottom-width: 1px; background: #f7f9fb; }

.titlebar { display: grid; grid-template-columns: 1fr auto 1fr; align-items: center; height: 28px; background: #dadfdf; }
.titlebar h1 { font-size: 13px; font-weight: 400; }
.quick { display: flex; align-items: center; gap: 8px; padding-left: 8px; color: #4a4a4a; }
.quick .dn { margin: 0 1px 0 -2px; }
.brand { width: 51px; margin-left: -4px; font: 17px/20px "DejaVu Sans", sans-serif; color: #55595c; white-space: nowrap; }
.brand sup { font-size: 6px; line-height: 8px; }
.flip svg { transform: scaleX(-1); }
.quick .off { color: #a6abab; }
.custom { display: flex; align-items: center; height: 24px; padding-left: 10px; border-left: 1px solid #aaa; margin-left: -4px; }
.winbtns { display: flex; justify-content: flex-end; gap: 16px; padding-right: 11px; }
.winbtns svg { width: 11px; height: 11px; }

.tabs { display: flex; gap: 1px; height: 29px; background: #3e4647; color: #fff; font-size: 13px; }
.tabs > button { padding: 0 23px; }
.tabs > .file { padding: 0 20px; margin-right: -1px; background: linear-gradient(160deg, #6bd43c, #4d9f30); }
.tabs > .active { background: #f7f9fb; color: #47822b; font-weight: 500; }
.help { display: flex; align-items: center; gap: 8px; margin-left: auto; padding: 0 8px 4px 0; font-weight: 700; }
.help .dn { margin: 0 5px 0 -2px; background: #fff; }

.ribbon { display: flex; height: 113px; border-bottom: 1px solid #b4c2c2; }
.group { display: flex; flex-direction: column; border-right: 1px solid #b4b8b8; margin-bottom: 3px; }
.body { display: flex; flex: none; gap: 8px; height: 85px; padding: 1px 7px 0; justify-content: center; }
.col button { height: 28px; gap: 4px; justify-content: flex-start; }
.col button .dn { margin-left: 3px; }
.col { min-width: 0; }
.big { flex-direction: column; justify-content: flex-start; min-width: 32px; padding-top: 6px; }
.big svg { width: 32px; height: 32px; margin-bottom: 9px; }
.big .dn { margin-top: 6px; }
.name { height: 24px; gap: 3px; padding-top: 3px; }
.tight .name { padding: 3px 6px 0; }

.main { display: flex; flex: 1; min-height: 0; }
.side { display: flex; flex-direction: column; flex: none; width: 294px; border-right: 3px solid #d8dfdf; background: #f7f9fb; }
.sidetabs { display: flex; flex: none; height: 26px; background: #dadfdf; }
.sidetabs button { width: 32px; }
.sidetabs .active { background: #f7f9fb; }
.treepane { display: flex; flex-direction: column; flex: 1; min-height: 0; margin: 0 5px 0 8px; border-bottom: 3px solid #d8dfdf; }
.tools { display: flex; flex: none; align-items: center; gap: 4px; height: 32px; padding: 0 2px 0 5px; }
.tools button { width: 22px; height: 24px; }
.tools .end { margin-left: auto; font-size: 16px; }
.dots { width: 2px; height: 16px; margin-left: 2px; background: repeating-linear-gradient(#aaa 0 2px, transparent 2px 4px); }
.set, .trio { display: flex; gap: 2px; }
.set { margin-left: 16px; }
.layerpane .set { margin-left: 19px; }
.vr { width: 1px; height: 24px; margin: 0 1px; background: #aaa; }
.layerpane .vr { margin: 0; }
.filter { display: flex; flex: none; align-items: center; gap: 6px; height: 28px; padding-left: 4px; }
.filter .box { display: flex; align-items: center; flex: 1; height: 28px; margin-left: -2px; padding-right: 5px; border: 1px solid #a3b0b0; background: #fff; }
.filter input { flex: 1; min-width: 0; height: 24px; border: 0; background: none; font: inherit; }
.box svg { width: 9px; height: 9px; }
.plus { padding: 0 7px 0 6px; }
.plus svg { width: 11px; height: 11px; }
.treewrap { display: flex; flex: 1; min-height: 0; margin-top: 6px; overflow: hidden; }
.tree { flex: 1; padding-top: 3px; padding-left: 3px; overflow: hidden; }
.tree li { display: flex; align-items: center; gap: 4px; height: 22px; }
.tw { width: 20px; height: 22px; margin-right: -4px; }
.tree .sup { color: #bdb5a0; }
.tree .insert { height: 14px; background: linear-gradient(#f7f9fb 6px, #5cc040 6px 8px, #e3e3e3 8px); }
.insert::before, .insert::after { content: ""; width: 2px; height: 6px; background: #5cc040; }
.insert::after { margin-left: auto; }
.tree .dim { background: #e3e3e3; color: #808284; }
.dim b { width: 4px; height: 5px; margin: -8px -3px 0 1px; background: #777; }
.dim .i { opacity: .75; }
.tree .child { background: linear-gradient(90deg, #f7f9fb 20px, #e3e3e3 20px); }
.scroll { display: flex; flex-direction: column; width: 15px; border: 1px solid #c0c4c4; background: #dee0e1; }
.up, .down { display: grid; place-items: center; height: 14px; background: #f7f9fb; border-bottom: 1px solid #ccc; }
.up::after { content: ""; width: 7px; height: 4px; background: #999; clip-path: polygon(0 100%, 100% 100%, 50% 0); }
.down::after { content: ""; width: 7px; height: 4px; background: #999; clip-path: polygon(0 0, 100% 0, 50% 100%); }
.track { flex: 112; }
.track.low { flex: 24; }
.thumb { flex: 299; background: #f9fafb; border: solid #b8bcbc; border-width: 1px 0; }
.layerpane { flex: none; padding: 0 5px 22px 8px; }
.layerpane .tools { height: 34px; }
.model { display: flex; height: 25px; border: 1px solid #ccd0d0; background: #f3f4f4; }
.model button { width: 24px; background: #ececee; border-right: 1px solid #ccc; }
select { flex: 1; min-width: 0; padding: 0 6px; border: 0; background: none; color: inherit; font: inherit; appearance: none; opacity: 1; }
.model select { color: #aaa; }
.model span, .geo span { display: grid; place-items: center; width: 15px; border-left: 1px solid #bbb; }
.layerlist { padding-left: 3px; }
.layerlist li { display: flex; align-items: center; gap: 9px; height: 20px; font-size: 13px; }
.layerlist .tw { height: 22px; margin-right: -9px; }
.layerlist .root { gap: 8px; font-size: 12px; }

.view { position: relative; flex: 1; min-width: 0; padding-top: 7px; background: #fff; }
.scene { position: absolute; inset: 0; width: 100%; height: 100%; }
.viewtools { position: relative; display: flex; gap: 2px; width: max-content; height: 32px; margin: 0 auto; padding: 3px; border: 1px solid #a0a0a0; background: #f8f9fb; }
.viewtools button { position: relative; width: 24px; }
.viewtools .on { width: 22px; height: 22px; margin: 1px; }
.more::after { content: ""; position: absolute; right: 1px; bottom: 2px; width: 4px; height: 4px; background: #444; clip-path: polygon(100% 0, 100% 100%, 0 100%); }
.note { position: relative; width: max-content; margin: 52px 0 0 118px; color: #f00; font: 300 20px/20px "Noto Sans CJK SC", sans-serif; }
.mode { position: absolute; left: 8px; bottom: 92px; font-size: 8px; color: #222; line-height: 16px; }
.tags text, .axis { font: 14px "Liberation Mono", monospace; fill: #996633; }
.axis.ax { fill: #f33; font-size: 12px; }
.axis.az { fill: #3ff; font-size: 12px; }

.status { display: flex; align-items: center; height: 47px; border-top: 1px solid #b0bcc4; background: #f5f8f9; }
.sbtns { display: flex; gap: 4px; padding: 14px 9px 0 6px; }
.sbtns button { width: 22px; height: 24px; }
.msgs { padding: 4px 0 0 6px; border-left: 1px solid #aaa; }
.msgs li::before { content: ""; display: inline-block; width: 5px; height: 5px; margin: 0 4px 3px 0; border-radius: 50%; background: #10607f; }
.find { display: flex; height: 28px; margin: 10px 97px 0 auto; padding: 1px 2px; border: solid #aaa; border-width: 0 1px; box-shadow: -4px 0 #f5f8f9, -5px 0 #aaa; }
.find button { width: 27px; border: 1px solid #b8b8b8; }
.find button + button { width: 16px; border-left: 0; }
.geo { display: flex; width: 177px; height: 25px; margin-top: 12px; border: 1px solid #aaa; background: #f7f8f8; }
.grip { width: 12px; height: 12px; margin: 26px 2px 0 4px; }
.dock { position: absolute; right: 0; bottom: 22px; width: 10px; height: 141px; border-radius: 8px 0 0 8px; background: rgba(70, 72, 78, .45); pointer-events: none; }
.dock svg { width: 10px; height: 141px; }
.mark { position: absolute; right: 19px; bottom: 7px; width: 168px; color: #111; pointer-events: none; }
.mark .cn { font: italic 400 41px/41px "Noto Sans CJK SC", sans-serif; white-space: nowrap; }
.mark span { color: #ff6633; }
.mark .url { padding-left: 2px; font: italic 16px/18px "DejaVu Sans", sans-serif; color: #999; }
.mark svg { position: absolute; left: 64px; top: -19px; width: 20px; height: 44px; }
```
